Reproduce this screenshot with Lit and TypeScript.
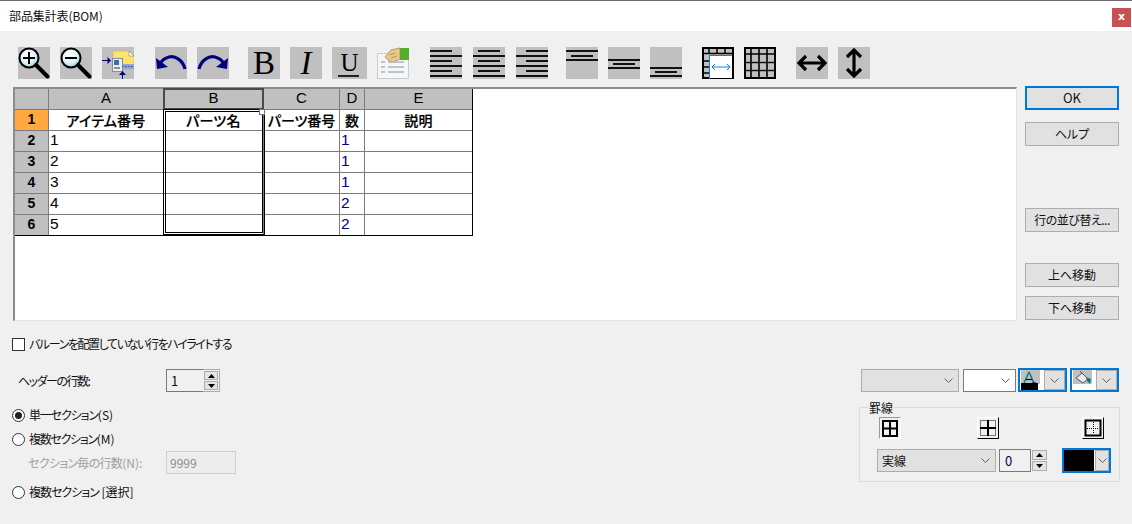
import { LitElement, html, css, svg } from "lit";
import { customElement } from "lit/decorators.js";

const chevron = html`<svg class="chev" width="9" height="5" viewBox="0 0 9 5"><path d="M.5.5 4.5 4.5 8.5.5" fill="none" stroke="#606060" stroke-width="1"/></svg>`;
const tri = (up: boolean) => html`<svg width="7" height="4" viewBox="0 0 7 4"><path d="${up ? "M3.5 0 7 4H0Z" : "M0 0H7L3.5 4Z"}" fill="#000"/></svg>`;

const ic = (body: unknown) => html`<svg class="ic" width="32" height="32" viewBox="0 0 32 32">${body}</svg>`;

const lens = (minus: boolean) => svg`
  <defs><radialGradient id="lg" cx=".4" cy=".35" r=".75"><stop offset="0" stop-color="#fff"/><stop offset=".55" stop-color="#dff3f6"/><stop offset="1" stop-color="#86c4d4"/></radialGradient></defs>
  <circle cx="11" cy="11" r="9.5" fill="url(#lg)" stroke="#000" stroke-width="2"/>
  <path d="M18 18 29.5 29.5" stroke="#000" stroke-width="4" stroke-linecap="round"/>
  <path d="M5 11H17" stroke="#000" stroke-width="2"/>
  ${minus ? "" : svg`<path d="M11 5V17" stroke="#000" stroke-width="2"/>`}`;

const bars = (rows: [number, number, number][]) =>
  rows.map(([y, x, w]) => svg`<rect x="${x}" y="${y}" width="${w}" height="2" fill="#111"/>`);

const alignRows = (x: number): [number, number, number][] => [
  [3, x, 22], [8, 0, 32], [13, x, 22], [18, 0, 32], [23, x, 22], [28, 0, 32],
];

const vRows = (a: number, b: number, c: number): [number, number, number][] => [
  [a, 0, 32], [b, 5, 22], [c, 0, 32],
];

const undo = svg`<path d="M30 22C28 13 20 8.500 14 10 10 11 7 13 5 17" fill="none" stroke="#000080" stroke-width="3.200"/><path d="M1 11 2 22 13 20Z" fill="#000080"/>`;

const grp1 = [
  ic(lens(false)),
  ic(lens(true)),
  ic(svg`
    <path d="M11 4H27L32 9V22H11Z" fill="#fde36a" stroke="#c4ab55" stroke-width=".5"/>
    <path d="M27 4 32 9H27Z" fill="#fff" stroke="#667" stroke-width=".5"/>
    <rect x="20" y="17" width="12" height="5" fill="#8fa8d0"/>
    <path d="M20 19.500H32" stroke="#3d5fa8" stroke-dasharray="2 1"/>
    <rect x="10.500" y="11.500" width="10" height="13" fill="#eee" stroke="#889"/>
    <rect x="12" y="13" width="5" height="5" fill="#3a6ea5"/>
    <path d="M12 21H18" stroke="#333"/>
    <path d="M0 13.500H8" stroke="#000080"/><path d="M5.500 10 9 13.500 5.500 17Z" fill="#000080"/>
    <path d="M20.500 26V32" stroke="#000080"/><path d="M17 28 20.500 24 24 28Z" fill="#000080"/>`),
];
const grp2 = [
  ic(undo),
  ic(svg`<g transform="matrix(-1 0 0 1 32 0)">${undo}</g>`),
];
const grp4 = [alignRows(0), alignRows(5), alignRows(10)].map((r) => ic(bars(r)));
const grp5 = [vRows(3, 8, 12), vRows(12, 16, 20), vRows(20, 24, 28)].map((r) => ic(bars(r)));
const grp6 = [
  html`<svg class="plain" width="32" height="32" viewBox="0 0 32 32">
    <rect x="1" y="1" width="30" height="30" fill="#c0c0c0" stroke="#000" stroke-width="2"/>
    <path d="M1 6.500H31M1 14H8M1 20H8M1 26H8M7 1V7M15 1V7M23 1V7" stroke="#000" stroke-width="1.500"/>
    <rect x="7.500" y="8.500" width="23" height="23" fill="#fff" stroke="#0a84e0" stroke-width="1"/>
    <path d="M10 20H28" stroke="#0a84e0"/><path d="M13 17 10 20 13 23M25 17 28 20 25 23" fill="none" stroke="#0a84e0"/>
    <path d="M31 8V32H8" fill="none" stroke="#000" stroke-width="2"/>
  </svg>`,
  html`<svg class="plain" width="32" height="32" viewBox="0 0 32 32">
    <rect x="1" y="1" width="30" height="30" fill="#c0c0c0" stroke="#000" stroke-width="2"/>
    <path d="M7 1V31M15 1V31M23 1V31M1 7H31" stroke="#000" stroke-width="1.600"/>
    <path d="M1 15.500H31M1 23.500H31" stroke="#111" stroke-width="1.300"/>
  </svg>`,
];
const grp7 = [
  ic(svg`<path d="M3 16H29M10 9 3 16 10 23M22 9 29 16 22 23" fill="none" stroke="#000" stroke-width="3.200"/>`),
  ic(svg`<path d="M16 3V29M9 10 16 3 23 10M9 22 16 29 23 22" fill="none" stroke="#000" stroke-width="3.200"/>`),
];

const report = html`<svg class="plain" width="32" height="32" viewBox="0 0 32 32">
  <rect x=".5" y="6.500" width="31" height="25" fill="#f4f6f7" stroke="#c4ced4"/>
  <rect x="23" y="1" width="9" height="12" fill="#4fae2c"/>
  <path d="M8 10 14 3 23 1V12L16 15 11 13Z" fill="#e9c98a" stroke="#a58a55" stroke-width=".8"/>
  <path d="M12 8 18 6M14 11 20 9" stroke="#a58a55" stroke-width=".8"/>
  <path d="M4 15H8M11 15H27M4 20H8M11 20H27M4 25H8M11 25H27" stroke="#aab2b8" stroke-width="1.500"/>
</svg>`;

const rowsData = [
  ["2", "1", "1"],
  ["3", "2", "1"],
  ["4", "3", "1"],
  ["5", "4", "2"],
  ["6", "5", "2"],
];

@customElement("app-root")
export class AppRoot extends LitElement {
  static styles = css`
    :host {
      display: block; width: 1132px; height: 524px; overflow: hidden; background: #f0f0f0; color: #111;
      font: 12px/16px "Noto Sans CJK JP", sans-serif; font-feature-settings: "palt";
    }
    .title {
      height: 30px; border-top: 1px solid #6a6a6a; background: #fff;
      display: flex; align-items: flex-start; justify-content: space-between; padding: 0 1px 0 9px;
    }
    .title span { margin-top: 7px; letter-spacing: -.1px; }
    .close {
      margin-top: 7px; width: 19px; height: 19px; background: #c75050; color: #fff;
      font: bold 11px/18px "DejaVu Sans", sans-serif; text-align: center;
    }

    .toolbar { display: flex; height: 32px; padding: 16px 0 0 18px; }
    .tg { display: flex; gap: 10px; }
    .tg.wide { gap: 11px; }
    .m21 { margin-left: 21px; } .m19 { margin-left: 19px; } .m18 { margin-left: 18px; } .m20 { margin-left: 20px; }
    .ic { background: #c0c0c0; display: block; }
    .plain { display: block; }
    .glyph {
      width: 32px; height: 32px; background: #c0c0c0; color: #000; text-align: center;
      font: 33px/33px "Liberation Serif", serif; font-feature-settings: normal;
    }
    .glyph.i { font-style: italic; }
    .glyph.u { width: 35px; font-size: 25px; line-height: 31px; display: flex; flex-direction: column; align-items: center; }
    .glyph.u i { display: block; width: 21px; height: 2px; margin: -3px 0 0 -2px; background: #222; }

    .main { display: flex; padding: 7px 0 0 13px; gap: 8px; }
    .pane {
      margin-top: 1px; width: 1004px; height: 234px; box-sizing: border-box; background: #fff;
      border-style: solid; border-width: 2px 1px 1px 2px; border-color: #8c8c8c #e4e4e4 #e4e4e4 #8c8c8c;
    }
    .table {
      position: relative; width: 458px; display: grid; box-sizing: border-box; background: #7c7c7c; gap: 1px;
      grid-template-columns: 33px 114px 99px 75px 24px 107px; grid-template-rows: repeat(7, 20px);
      border-right: 1px solid #000; border-bottom: 1px solid #000;
      font: 15.500px/18px "Liberation Sans", Arial, sans-serif; color: #000; font-feature-settings: normal;
    }
    .c { background: #fff; padding-left: 1px; white-space: nowrap; overflow: hidden; }
    .h { background: #c0c0c0; text-align: center; padding: 0; font-size: 15px; line-height: 17px; }
    .rh { background: #c0c0c0; text-align: center; padding: 0; font-weight: bold; font-size: 14px; line-height: 19px; }
    .rh.act { background: #ffa940; }
    .hd {
      background: #fff; padding: 0; text-align: center; font: 500 14px/20px "Noto Sans CJK JP", sans-serif;
      font-feature-settings: "palt"; letter-spacing: .2px; -webkit-text-stroke: .2px #000;
    }
    .hd.tight { letter-spacing: -.1px; overflow: visible; }
    .num { color: #000080; }
    .colsel { outline: 1px solid #4a4a4a; box-shadow: inset 0 0 0 1px #4a4a4a; z-index: 1; }
    .sel {
      position: absolute; left: 148px; top: 20px; width: 102px; height: 127px; box-sizing: border-box;
      border: 1px solid #000; border-bottom-width: 2px; padding: 1px; z-index: 2;
    }
    .sel div { height: 100%; box-sizing: border-box; border: 1px solid #000; }
    .sel b {
      position: absolute; right: -1px; top: -1px; width: 4px; height: 4px; background: #fff; border: 1px solid #777;
    }

    .side { display: flex; flex-direction: column; width: 94px; }
    .btn {
      height: 24px; box-sizing: border-box; border: 1px solid #adadad; background: #e1e1e1;
      text-align: center; line-height: 22px; white-space: nowrap;
    }
    .btn.ok { border: 2px solid #0078d7; line-height: 20px; font-size: 13px; }
    .btn.sort { letter-spacing: -.5px; }
    .gap12 { margin-top: 12px; } .gap62 { margin-top: 62px; } .gap31 { margin-top: 31px; } .gap9 { margin-top: 9px; }

    .bottom { display: flex; justify-content: space-between; padding: 15px 12px 0 12px; }
    .left { display: flex; flex-direction: column; }
    .line { display: flex; align-items: center; gap: 4px; height: 16px; white-space: nowrap; }
    .ls14 { letter-spacing: -1.400px; } .ls15 { letter-spacing: -1.500px; } .ls11 { letter-spacing: -1.150px; }
    .ls13 { letter-spacing: -1.300px; } .ls7 { letter-spacing: -.7px; } .ls10 { letter-spacing: -1px; }
    .box { width: 11px; height: 11px; border: 1px solid #333; background: #fff; }
    .headers { display: flex; align-items: center; margin: 17px 0 0 6px; height: 23px; }
    .headers label { width: 148px; }
    .spin { display: flex; height: 23px; box-sizing: border-box; }
    .spin .val {
      width: 37px; box-sizing: border-box; border: 1px solid #7a7a7a; border-right: 0; padding-left: 4px; font-size: 13px; line-height: 21px;
    }
    .spin .arrows {
      width: 17px; box-sizing: border-box; border: 1px solid #adadad; border-left: 0; padding: 1px;
      display: flex; flex-direction: column; gap: 1px;
    }
    .ar {
      flex: 1; background: #e4e4e4; border: 1px solid #adadad; display: flex; align-items: center; justify-content: center;
    }
    .radio {
      width: 11px; height: 11px; border: 1px solid #333; border-radius: 50%; background: #fff;
      display: flex; align-items: center; justify-content: center;
    }
    .radio.on::after { content: ""; width: 7px; height: 7px; border-radius: 50%; background: #222; }
    .r1 { margin-top: 15px; } .r2 { margin-top: 8px; } .r3 { margin-top: 10px; }
    .sub { display: flex; align-items: center; height: 23px; margin: 4px 0 0 16px; color: #a0a0a0; }
    .sub label { width: 138px; white-space: nowrap; }
    .sub .dis {
      width: 70px; height: 23px; box-sizing: border-box; border: 1px solid #cfcfcf; background: #ededed; color: #8a8a8a;
      padding-left: 3px; font-size: 12px; line-height: 21px;
    }

    .right { width: 261px; display: flex; flex-direction: column; padding-top: 32px; }
    .fmt { display: flex; padding-left: 2px; height: 24px; }
    .sel-d {
      display: flex; align-items: center; justify-content: space-between; box-sizing: border-box;
      background: #e1e1e1; border: 1px solid #adadad; padding: 0 5px 0 4px; height: 23px;
    }
    .sel-d.font { width: 98px; margin: 1px 4px 0 0; }
    .sel-d.size { width: 53px; background: #fff; border-color: #7a7a7a; margin: 1px 2px 0 0; }
    .split {
      display: flex; box-sizing: border-box; border: 2px solid #0078d7; background: #fff; height: 24px; width: 49px;
      justify-content: space-between;
    }
    .split + .split { margin-left: 3px; }
    .swatch { display: block; margin: 0 0 0 1px; }
    .drop {
      width: 21px; box-sizing: border-box; background: #e1e1e1; border: 1px solid #adadad; display: flex;
      align-items: center; justify-content: center;
    }
    .group {
      position: relative; margin-top: 15px; height: 75px; box-sizing: border-box; border: 1px solid #dcdcdc;
      display: flex; flex-direction: column; padding: 9px 0 0 17px;
    }
    .legend { position: absolute; left: 8px; top: -8px; padding: 0 1px; background: #f0f0f0; }
    .tiles { display: flex; height: 22px; margin-left: 2px; }
    .tile { width: 22px; height: 22px; box-sizing: border-box; border: 1px solid; border-color: #fff #000 #000 #fff; display: flex; align-items: center; justify-content: center; }
    .tile.on { border-color: #9a9a9a #fff #fff #9a9a9a; }
    .t2 { margin-left: 76px; } .t3 { margin-left: 83px; }
    .ctrls { display: flex; margin-top: 9px; height: 25px; }
    .sel-d.line-s { width: 119px; margin: 1px 3px 0 0; padding-left: 4px; }
    .spin.sm { margin-top: 1px; }
    .spin.sm .val { width: 32px; border-right: 1px solid #7a7a7a; padding-left: 5px; color: #000060; }
    .spin.sm .arrows { border: 0; width: 16px; padding: 1px 0 1px 1px; margin-right: 15px; }
    .split.blk { width: 49px; height: 25px; margin: 0; }
    .blkfill { width: 30px; background: #000; }
    .blkdrop { width: 14px; }
  `;

  render() {
    return html`
      <div class="title"><span>部品集計表(BOM)</span><div class="close">x</div></div>

      <div class="toolbar">
        <div class="tg">${grp1}</div>
        <div class="tg m21">${grp2}</div>
        <div class="tg m19">
          <div class="glyph">B</div>
          <div class="glyph i">I</div>
          <div class="glyph u">U<i></i></div>
          ${report}
        </div>
        <div class="tg wide m21">${grp4}</div>
        <div class="tg m18">${grp5}</div>
        <div class="tg m20">${grp6}</div>
        <div class="tg m20">${grp7}</div>
      </div>

      <div class="main">
        <div class="pane">
          <div class="table">
            <div class="h"></div><div class="h">A</div><div class="h colsel">B</div><div class="h">C</div><div class="h">D</div><div class="h">E</div>
            <div class="rh act">1</div>
            <div class="c hd">アイテム番号</div><div class="c hd">パーツ名</div><div class="c hd tight">パーツ番号</div><div class="c hd">数</div><div class="c hd">説明</div>
            ${rowsData.map(([r, a, d]) => html`
              <div class="rh">${r}</div><div class="c">${a}</div><div class="c"></div><div class="c"></div><div class="c num">${d}</div><div class="c"></div>`)}
            <div class="sel"><div></div><b></b></div>
          </div>
        </div>
        <div class="side">
          <div class="btn ok">OK</div>
          <div class="btn gap12">ヘルプ</div>
          <div class="btn gap62 sort">行の並び替え...</div>
          <div class="btn gap31">上へ移動</div>
          <div class="btn gap9">下へ移動</div>
        </div>
      </div>

      <div class="bottom">
        <div class="left">
          <div class="line"><span class="box"></span><span class="ls14">バルーンを配置していない行をハイライトする</span></div>
          <div class="headers">
            <label><span class="ls15">ヘッダーの行数</span>:</label>
            <div class="spin"><div class="val">1</div><div class="arrows"><div class="ar">${tri(true)}</div><div class="ar">${tri(false)}</div></div></div>
          </div>
          <div class="line r1"><span class="radio on"></span><span><span class="ls11">単一セクション</span>(S)</span></div>
          <div class="line r2"><span class="radio"></span><span><span class="ls13">複数セクション</span>(M)</span></div>
          <div class="sub"><label><span class="ls7">セクション毎の行数</span>(N):</label><div class="dis">9999</div></div>
          <div class="line r3"><span class="radio"></span><span><span class="ls10">複数セクション</span> [選択]</span></div>
        </div>
        <div class="right">
          <div class="fmt">
            <div class="sel-d font"><span></span>${chevron}</div>
            <div class="sel-d size"><span></span>${chevron}</div>
            <div class="split">
              <svg class="swatch" width="19" height="20" viewBox="0 0 19 20">
                <rect width="19" height="14" fill="#c0c0c0"/>
                <path d="M3 13 8 2" fill="none" stroke="#0f7b7b" stroke-width="1.500"/>
                <path d="M8 2 13 13" fill="none" stroke="#0f7b7b" stroke-width="1.500"/>
                <path d="M5 9.500H11" stroke="#000080" stroke-width="1.200"/>
                <path d="M11 13H15" stroke="#000080" stroke-width="1.200"/>
                <rect y="13" width="17" height="7" fill="#000"/>
              </svg>
              <div class="drop">${chevron}</div>
            </div>
            <div class="split">
              <svg class="swatch" width="19" height="20" viewBox="0 0 19 20">
                <rect width="19" height="14" fill="#c0c0c0"/>
                <path d="M3 8 9 3 15 9 10 13Z" fill="#e8e8e8" stroke="#555"/>
                <path d="M7 1 12 6" stroke="#555"/>
                <path d="M13 7 18 9 17 14 14 11Z" fill="#0f7b7b"/>
                <rect y="14" width="17" height="6" fill="#fff"/>
              </svg>
              <div class="drop">${chevron}</div>
            </div>
          </div>
          <div class="group">
            <span class="legend">罫線</span>
            <div class="tiles">
              <div class="tile on"><svg width="16" height="17" viewBox="0 0 16 17"><path d="M1 1H15V16H1ZM8 1V16M1 8.500H15" fill="none" stroke="#000" stroke-width="2"/></svg></div>
              <div class="tile t2"><svg width="18" height="18" viewBox="0 0 18 18"><rect x="1.500" y="1.500" width="15" height="15" fill="none" stroke="#000" stroke-dasharray="1 1"/><path d="M9 1V17M1 9H17" stroke="#000" stroke-width="2"/></svg></div>
              <div class="tile t3"><svg width="18" height="18" viewBox="0 0 18 18"><rect x="1.500" y="1.500" width="15" height="15" fill="none" stroke="#000" stroke-width="2"/><path d="M9.500 3V15M3 9.500H15" stroke="#000" stroke-dasharray="1 1"/></svg></div>
            </div>
            <div class="ctrls">
              <div class="sel-d line-s"><span>実線</span>${chevron}</div>
              <div class="spin sm"><div class="val">0</div><div class="arrows"><div class="ar">${tri(true)}</div><div class="ar">${tri(false)}</div></div></div>
              <div class="split blk"><div class="blkfill"></div><div class="drop blkdrop">${chevron}</div></div>
            </div>
          </div>
        </div>
      </div>
    `;
  }
}
